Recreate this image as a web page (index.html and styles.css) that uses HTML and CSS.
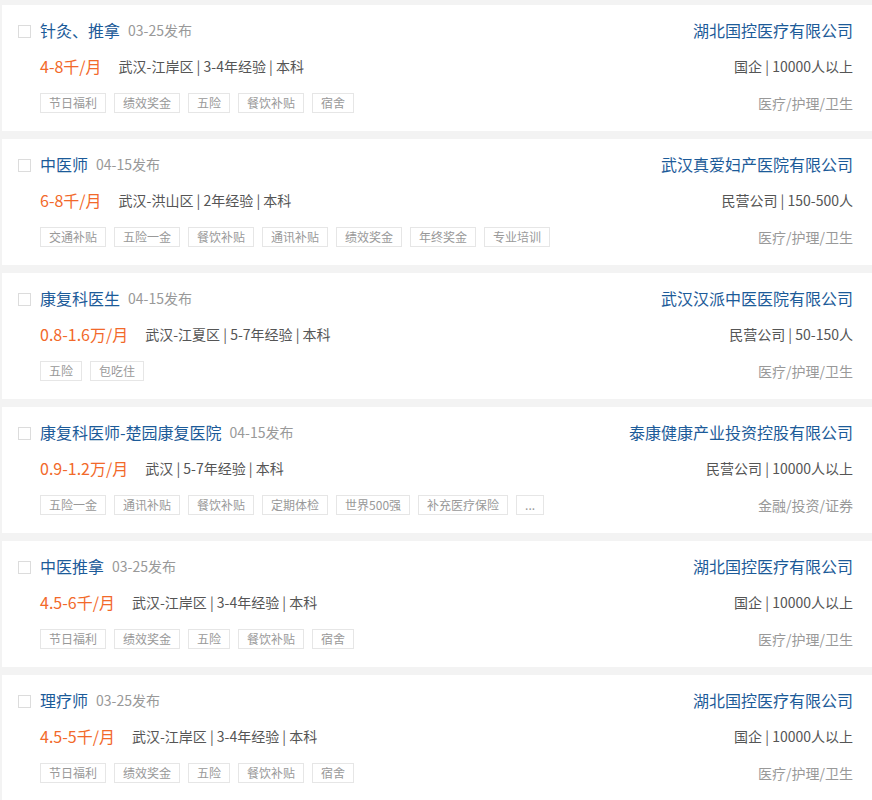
FILE: index.html
```html
<!DOCTYPE html>
<html lang="zh-CN">
<head>
  <meta charset="UTF-8" />
  <meta name="viewport" content="width=device-width, initial-scale=1.0"/>
  <title>职位列表</title>
  <link rel="stylesheet" href="styles.css">
</head>
<body>

  <div class="job-list">

    <div class="job-card">
      <div class="job-left">
        <div class="job-title">
          <span class="check"></span>
          <a class="job-name">针灸、推拿</a>
          <span class="job-date">03-25发布</span>
        </div>
        <div class="job-info">
          <span class="salary">4-8千/月</span>
          <span class="detail">武汉-江岸区 | 3-4年经验 | 本科</span>
        </div>
        <div class="tags">
          <span class="tag">节日福利</span>
          <span class="tag">绩效奖金</span>
          <span class="tag">五险</span>
          <span class="tag">餐饮补贴</span>
          <span class="tag">宿舍</span>
        </div>
      </div>
      <div class="job-right">
        <a class="company">湖北国控医疗有限公司</a>
        <div class="company-type">国企 | 10000人以上</div>
        <div class="industry">医疗/护理/卫生</div>
      </div>
    </div>

    <div class="job-card">
      <div class="job-left">
        <div class="job-title">
          <span class="check"></span>
          <a class="job-name">中医师</a>
          <span class="job-date">04-15发布</span>
        </div>
        <div class="job-info">
          <span class="salary">6-8千/月</span>
          <span class="detail">武汉-洪山区 | 2年经验 | 本科</span>
        </div>
        <div class="tags">
          <span class="tag">交通补贴</span>
          <span class="tag">五险一金</span>
          <span class="tag">餐饮补贴</span>
          <span class="tag">通讯补贴</span>
          <span class="tag">绩效奖金</span>
          <span class="tag">年终奖金</span>
          <span class="tag">专业培训</span>
        </div>
      </div>
      <div class="job-right">
        <a class="company">武汉真爱妇产医院有限公司</a>
        <div class="company-type">民营公司 | 150-500人</div>
        <div class="industry">医疗/护理/卫生</div>
      </div>
    </div>

    <div class="job-card">
      <div class="job-left">
        <div class="job-title">
          <span class="check"></span>
          <a class="job-name">康复科医生</a>
          <span class="job-date">04-15发布</span>
        </div>
        <div class="job-info">
          <span class="salary">0.8-1.6万/月</span>
          <span class="detail">武汉-江夏区 | 5-7年经验 | 本科</span>
        </div>
        <div class="tags">
          <span class="tag">五险</span>
          <span class="tag">包吃住</span>
        </div>
      </div>
      <div class="job-right">
        <a class="company">武汉汉派中医医院有限公司</a>
        <div class="company-type">民营公司 | 50-150人</div>
        <div class="industry">医疗/护理/卫生</div>
      </div>
    </div>

    <div class="job-card">
      <div class="job-left">
        <div class="job-title">
          <span class="check"></span>
          <a class="job-name">康复科医师-楚园康复医院</a>
          <span class="job-date">04-15发布</span>
        </div>
        <div class="job-info">
          <span class="salary">0.9-1.2万/月</span>
          <span class="detail">武汉 | 5-7年经验 | 本科</span>
        </div>
        <div class="tags">
          <span class="tag">五险一金</span>
          <span class="tag">通讯补贴</span>
          <span class="tag">餐饮补贴</span>
          <span class="tag">定期体检</span>
          <span class="tag">世界500强</span>
          <span class="tag">补充医疗保险</span>
          <span class="tag">...</span>
        </div>
      </div>
      <div class="job-right">
        <a class="company">泰康健康产业投资控股有限公司</a>
        <div class="company-type">民营公司 | 10000人以上</div>
        <div class="industry">金融/投资/证券</div>
      </div>
    </div>

    <div class="job-card">
      <div class="job-left">
        <div class="job-title">
          <span class="check"></span>
          <a class="job-name">中医推拿</a>
          <span class="job-date">03-25发布</span>
        </div>
        <div class="job-info">
          <span class="salary">4.5-6千/月</span>
          <span class="detail">武汉-江岸区 | 3-4年经验 | 本科</span>
        </div>
        <div class="tags">
          <span class="tag">节日福利</span>
          <span class="tag">绩效奖金</span>
          <span class="tag">五险</span>
          <span class="tag">餐饮补贴</span>
          <span class="tag">宿舍</span>
        </div>
      </div>
      <div class="job-right">
        <a class="company">湖北国控医疗有限公司</a>
        <div class="company-type">国企 | 10000人以上</div>
        <div class="industry">医疗/护理/卫生</div>
      </div>
    </div>

    <div class="job-card">
      <div class="job-left">
        <div class="job-title">
          <span class="check"></span>
          <a class="job-name">理疗师</a>
          <span class="job-date">03-25发布</span>
        </div>
        <div class="job-info">
          <span class="salary">4.5-5千/月</span>
          <span class="detail">武汉-江岸区 | 3-4年经验 | 本科</span>
        </div>
        <div class="tags">
          <span class="tag">节日福利</span>
          <span class="tag">绩效奖金</span>
          <span class="tag">五险</span>
          <span class="tag">餐饮补贴</span>
          <span class="tag">宿舍</span>
        </div>
      </div>
      <div class="job-right">
        <a class="company">湖北国控医疗有限公司</a>
        <div class="company-type">国企 | 10000人以上</div>
        <div class="industry">医疗/护理/卫生</div>
      </div>
    </div>

  </div>

</body>
</html>
```

FILE: styles.css
```css
body {
  margin: 0;
  background-color: #f3f3f3;
  font-family: "Microsoft YaHei", "Noto Sans CJK SC", sans-serif;
  color: #555;
}

.job-list {
  display: flex;
  flex-direction: column;
  gap: 8px;
  padding: 5px 0 0 2px;
}

.job-card {
  display: flex;
  justify-content: space-between;
  background-color: #ffffff;
  height: 126px;
  box-sizing: border-box;
  padding: 13px 19px 18px 16px;
}

.job-title {
  display: flex;
  align-items: center;
  height: 24px;
}

.check {
  width: 11px;
  height: 11px;
  border: 1px solid #dcdcdc;
  margin-right: 9px;
  margin-top: 2px;
}

.job-name {
  font-size: 16px;
  color: #1c5b99;
  margin-right: 8px;
}

.job-date {
  font-size: 14px;
  color: #999;
}

.job-info {
  display: flex;
  align-items: center;
  height: 24px;
  margin-top: 12px;
  padding-left: 22px;
}

.salary {
  font-size: 16px;
  color: #f2692a;
  margin-right: 17px;
}

.detail {
  font-size: 14px;
  color: #555;
}

.tags {
  display: flex;
  gap: 8px;
  margin-top: 15px;
  padding-left: 22px;
}

.tag {
  font-size: 12px;
  line-height: 18px;
  height: 18px;
  padding: 0 8px;
  border: 1px solid #e6e6e6;
  color: #999;
}

.job-right {
  display: flex;
  flex-direction: column;
  align-items: flex-end;
}

.company {
  font-size: 16px;
  line-height: 24px;
  color: #1c5b99;
}

.company-type {
  font-size: 14px;
  line-height: 24px;
  margin-top: 12px;
  color: #555;
}

.industry {
  font-size: 14px;
  line-height: 20px;
  margin-top: 15px;
  color: #999;
}
```
